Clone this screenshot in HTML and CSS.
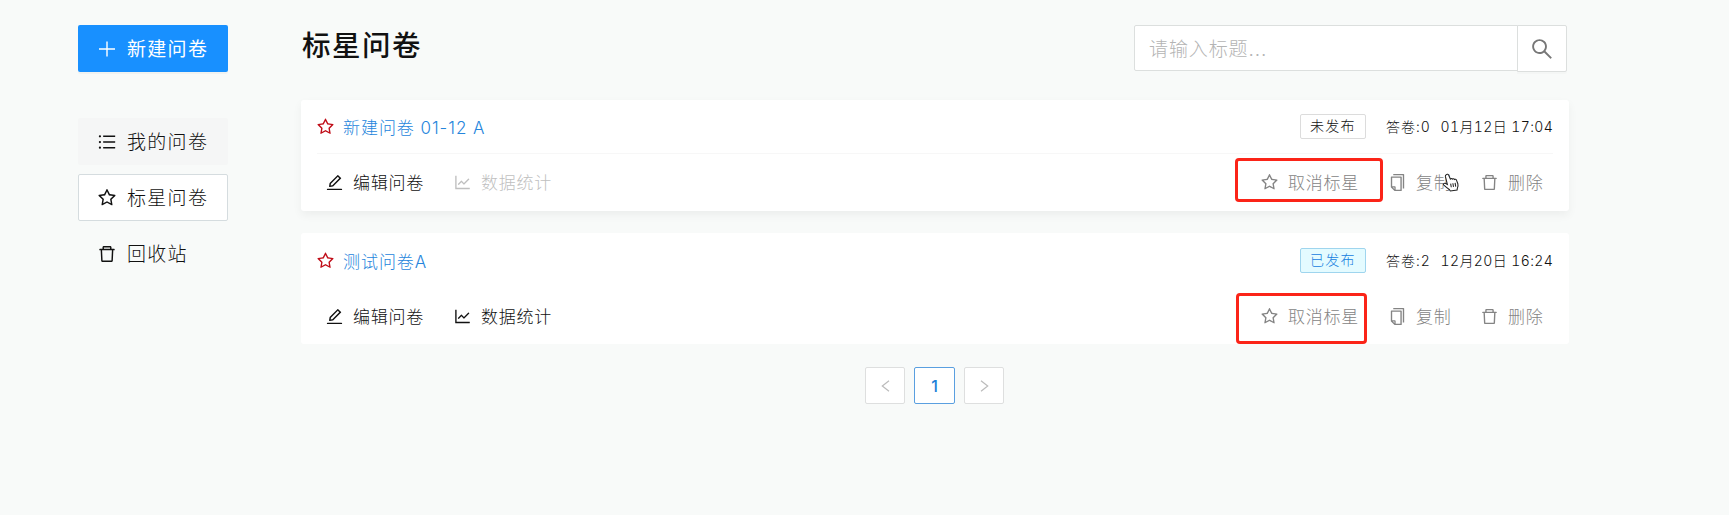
FILE: index.html
```html
<!DOCTYPE html>
<html lang="zh-CN">
<head>
<meta charset="utf-8">
<title>标星问卷</title>
<link rel="stylesheet" href="styles.css">
</head>
<body>
<svg class="defs" width="0" height="0">
  <symbol id="star" viewBox="64 64 896 896"><path d="M908.1 353.1l-253.9-36.900L540.7 86.100c-3.100-6.300-8.200-11.400-14.500-14.500-15.800-7.800-35-1.300-42.900 14.500L369.800 316.200l-253.900 36.900c-7 1-13.400 4.300-18.300 9.300a32.050 32.050 0 0 0 .6 45.300l183.700 179.100-43.400 252.900a31.950 31.950 0 0 0 46.400 33.700L512 754l227.100 119.400c6.200 3.300 13.400 4.400 20.300 3.200 17.400-3 29.100-19.500 26.100-36.900l-43.400-252.900 183.700-179.100c5-4.900 8.300-11.300 9.300-18.300 2.700-17.500-9.500-33.700-27-36.300zM664.800 561.600l36.100 210.300L512 672.700 323.100 772l36.100-210.300-152.800-149L417.600 382 512 190.700 606.400 382l211.200 30.700-152.800 148.900z"/></symbol>
  <symbol id="trash" viewBox="64 64 896 896"><path d="M360 184h-8c4.400 0 8-3.600 8-8v8h304v-8c0 4.400 3.600 8 8 8h-8v72h72v-80c0-35.300-28.700-64-64-64H352c-35.300 0-64 28.700-64 64v80h72v-72zm504 72H160c-17.700 0-32 14.300-32 32v32c0 4.400 3.600 8 8 8h60.400l24.700 523c1.600 34.100 29.800 61 63.900 61h454c34.200 0 62.300-26.800 63.900-61l24.700-523H888c4.400 0 8-3.600 8-8v-32c0-17.700-14.300-32-32-32zM731.300 840H292.700l-24.200-512h487l-24.200 512z"/></symbol>
  <symbol id="list" viewBox="64 64 896 896"><path d="M912 192H328c-4.400 0-8 3.600-8 8v56c0 4.400 3.600 8 8 8h584c4.400 0 8-3.600 8-8v-56c0-4.400-3.600-8-8-8zm0 284H328c-4.400 0-8 3.600-8 8v56c0 4.400 3.600 8 8 8h584c4.400 0 8-3.600 8-8v-56c0-4.400-3.600-8-8-8zm0 284H328c-4.400 0-8 3.600-8 8v56c0 4.400 3.600 8 8 8h584c4.400 0 8-3.600 8-8v-56c0-4.400-3.600-8-8-8zM104 228a56 56 0 1 0 112 0 56 56 0 1 0-112 0zm0 284a56 56 0 1 0 112 0 56 56 0 1 0-112 0zm0 284a56 56 0 1 0 112 0 56 56 0 1 0-112 0z"/></symbol>
  <symbol id="edit" viewBox="64 64 896 896"><path d="M257.700 752c2 0 4-.2 6-.5L431.900 722c2-.4 3.900-1.300 5.300-2.800l423.900-423.900a9.960 9.960 0 0 0 0-14.100L694.900 114.900c-1.900-1.900-4.400-2.900-7.100-2.900s-5.200 1-7.100 2.900L256.800 538.800c-1.500 1.500-2.400 3.300-2.800 5.300l-29.500 168.200a33.500 33.500 0 0 0 9.400 29.800c6.600 6.400 14.900 9.900 23.800 9.900zm67.400-174.400L687.800 215l73.300 73.300-362.700 362.600-88.900 15.700 15.600-89zM880 836H144c-17.700 0-32 14.300-32 32v36c0 4.400 3.600 8 8 8h784c4.400 0 8-3.600 8-8v-36c0-17.700-14.300-32-32-32z"/></symbol>
  <symbol id="chart" viewBox="64 64 896 896"><path d="M888 792H200V168c0-4.400-3.600-8-8-8h-56c-4.400 0-8 3.600-8 8v688c0 4.400 3.600 8 8 8h752c4.400 0 8-3.600 8-8v-56c0-4.400-3.600-8-8-8zM305.800 637.700c3.100 3.100 8.100 3.100 11.300 0l138.300-137.600L583 628.500c3.100 3.100 8.200 3.100 11.300 0l275.400-275.300c3.100-3.100 3.100-8.200 0-11.300l-39.600-39.600a8.030 8.030 0 0 0-11.300 0l-230 229.900L461.400 404a8.030 8.030 0 0 0-11.300 0L266.300 586.700a8.030 8.030 0 0 0 0 11.300l39.500 39.700z"/></symbol>
  <symbol id="copy" viewBox="64 64 896 896"><path d="M832 64H296c-4.400 0-8 3.600-8 8v56c0 4.400 3.600 8 8 8h496v688c0 4.400 3.600 8 8 8h56c4.400 0 8-3.600 8-8V96c0-17.700-14.300-32-32-32zM704 192H192c-17.700 0-32 14.300-32 32v530.700c0 8.500 3.400 16.600 9.400 22.600l173.300 173.300c2.200 2.200 4.700 4 7.400 5.500v1.900h4.200c3.500 1.300 7.200 2 11 2H704c17.700 0 32-14.300 32-32V224c0-17.700-14.300-32-32-32zM350 856.200L263.900 770H350v86.200zM664 888H414V746c0-22.100-17.900-40-40-40H232V264h432v624z"/></symbol>
  <symbol id="search" viewBox="64 64 896 896"><path d="M909.600 854.500L649.900 594.800C690.200 542.700 712 479 712 412c0-80.200-31.300-155.400-87.900-212.100-56.600-56.700-132-87.900-212.100-87.900s-155.500 31.300-212.100 87.900C143.200 256.500 112 331.800 112 412c0 80.100 31.300 155.500 87.900 212.100C256.500 680.800 331.800 712 412 712c67 0 130.600-21.800 182.700-62l259.700 259.600a8.200 8.200 0 0 0 11.600 0l43.600-43.500a8.200 8.200 0 0 0 0-11.600zM570.400 570.400C528 612.700 471.800 636 412 636s-116-23.300-158.400-65.600C211.300 528 188 471.800 188 412s23.300-116.100 65.600-158.400C296 211.300 352.200 188 412 188s116.100 23.200 158.400 65.600S636 352.200 636 412s-23.300 116.100-65.600 158.400z"/></symbol>
</svg>

<div class="layout">
  <aside class="sidebar">
    <button class="create"><svg class="plus" viewBox="0 0 16 16"><path d="M8 .5v15M0 8h16"/></svg><span>新建问卷</span></button>
    <nav class="menu">
      <a class="menu-item hover"><svg class="icon"><use href="#list"/></svg><span>我的问卷</span></a>
      <a class="menu-item active"><svg class="icon"><use href="#star"/></svg><span>标星问卷</span></a>
      <a class="menu-item"><svg class="icon"><use href="#trash"/></svg><span>回收站</span></a>
    </nav>
  </aside>

  <main class="content">
    <header class="header">
      <h1 class="heading">标星问卷</h1>
      <div class="search">
        <div class="search-input">请输入标题...</div>
        <div class="search-button"><svg class="search-icon"><use href="#search"/></svg></div>
      </div>
    </header>

    <section class="card raised">
      <div class="card-top">
        <svg class="icon-star"><use href="#star"/></svg>
        <a class="card-title">新建问卷 01-12 A</a>
        <span class="tag">未发布</span>
        <span class="count">答卷:0</span>
        <span class="date">01月12日 17:04</span>
      </div>
      <div class="card-actions">
        <a class="action edit"><svg class="icon-sm"><use href="#edit"/></svg><span>编辑问卷</span></a>
        <a class="action stat disabled"><svg class="icon-sm"><use href="#chart"/></svg><span>数据统计</span></a>
        <a class="action unstar muted"><svg class="icon-sm"><use href="#star"/></svg><span>取消标星</span><i class="mark wide"></i></a>
        <a class="action copy muted"><svg class="icon-sm"><use href="#copy"/></svg><span>复制</span>
          <svg class="cursor" viewBox="0 0 17 18"><path d="M3.500 1.600c.9-.8 2-.3 2.400.6l1.500 3.500c.7-.7 1.500-.5 1.900.1.700-.6 1.600-.4 2 .3.700-.4 1.600-.1 1.900.6l1.300 3.500c.5 1.700.1 3.200-.5 4.500l-.2 1.400-6.400.9-1-1.400C4.600 14.500 2.900 13 1.200 11.500c-.9-1 .3-2.200 1.400-1.700l2 1L2.700 3.200c-.1-.6.3-1.300.8-1.600z"/><path d="M7.700 10l.6 3.500M9.800 9.700l.6 3.500M11.900 9.400l.6 3.500"/></svg>
        </a>
        <a class="action muted"><svg class="icon-sm"><use href="#trash"/></svg><span>删除</span></a>
      </div>
    </section>

    <section class="card">
      <div class="card-top plain">
        <svg class="icon-star"><use href="#star"/></svg>
        <a class="card-title">测试问卷A</a>
        <span class="tag published">已发布</span>
        <span class="count">答卷:2</span>
        <span class="date">12月20日 16:24</span>
      </div>
      <div class="card-actions">
        <a class="action edit"><svg class="icon-sm"><use href="#edit"/></svg><span>编辑问卷</span></a>
        <a class="action stat"><svg class="icon-sm"><use href="#chart"/></svg><span>数据统计</span></a>
        <a class="action unstar muted"><svg class="icon-sm"><use href="#star"/></svg><span>取消标星</span><i class="mark narrow"></i></a>
        <a class="action copy muted"><svg class="icon-sm"><use href="#copy"/></svg><span>复制</span></a>
        <a class="action muted"><svg class="icon-sm"><use href="#trash"/></svg><span>删除</span></a>
      </div>
    </section>

    <div class="pagination">
      <span class="page"><svg class="arrow" viewBox="0 0 8 12"><path d="M7.500 .8L.8 6l6.700 5.200"/></svg></span>
      <span class="page current">1</span>
      <span class="page"><svg class="arrow" viewBox="0 0 8 12"><path d="M.5 .8L7.200 6 .5 11.200"/></svg></span>
    </div>
  </main>
</div>
</body>
</html>
```
FILE: styles.css
```css
* { box-sizing: border-box; }
body {
  margin: 0;
  min-height: 515px;
  background: #f8faf9;
  color: #111;
  font-family: Inter, "Noto Sans CJK SC", sans-serif;
  font-weight: 300;
  white-space: nowrap;
  overflow: hidden;
}
svg { fill: currentColor; flex: none; }
.defs { position: absolute; }
.layout { display: flex; padding: 25px 160px 0 78px; }

.sidebar { width: 150px; margin-right: 73px; flex: none; }
.create, .menu-item {
  display: flex;
  align-items: center;
  width: 150px;
  height: 47px;
  padding: 0 0 2px 20px;
  border: 1px solid transparent;
  border-radius: 2px;
  font: inherit;
  font-size: 19px;
  letter-spacing: 1.300px;
}
.create { background: #1890ff; color: #fff; font-weight: 400; box-shadow: 0 2px 0 rgba(0, 0, 0, .03); }
.plus { width: 16px; height: 16px; margin: 2px 12px 0 0; fill: none; stroke: #fff; stroke-width: 1.400; }
.menu { margin-top: 46px; display: flex; flex-direction: column; gap: 9px; }
.icon { width: 18px; height: 18px; margin: 2px 11px 0 -1px; }
.menu-item.hover { background: #f5f6f6; }
.menu-item.active { background: #fff; border-color: #d5dcdf; }

.content { flex: 1; min-width: 0; }
.header { display: flex; justify-content: space-between; height: 75px; padding-right: 2px; }
.heading { margin: 0; padding: 2px 0 0 1px; font-size: 28.500px; line-height: 38px; font-weight: 500; letter-spacing: 1.500px; }
.search { display: flex; }
.search-input {
  width: 384px;
  height: 46px;
  padding: 1px 0 0 14px;
  border: 1px solid #dcdfde;
  border-radius: 2px 0 0 2px;
  background: #fff;
  color: #b4b4b4;
  font-size: 19px;
  line-height: 45px;
  letter-spacing: .900px;
}
.search-button {
  display: flex;
  align-items: center;
  justify-content: center;
  width: 50px;
  height: 47px;
  margin-left: -1px;
  border: 1px solid #dcdfde;
  border-radius: 0 2px 2px 0;
  background: #fff;
  color: #777;
  box-shadow: 0 2px 0 rgba(0, 0, 0, .015);
}
.search-icon { width: 24px; height: 22px; }

.card { width: 1268px; height: 111px; margin-bottom: 22px; padding: 0 16px; border-radius: 3px; background: #fff; }
.card.raised { box-shadow: 0 4px 10px rgba(0, 0, 0, .05); }
.card-top { display: flex; align-items: center; height: 54px; border-bottom: 1px solid #f7f7f7; }
.card-top.plain { height: 55px; border-color: transparent; }
.icon-star { width: 17px; height: 18px; margin: 1px 9px 0 0; color: #c00d18; }
.card-title { margin-right: auto; color: #2585dc; font-size: 17px; letter-spacing: .950px; }
.tag {
  width: 66px;
  height: 25px;
  margin-right: 20px;
  padding-left: 9px;
  border: 1px solid #dcdcdc;
  border-radius: 2px;
  font-size: 14px;
  line-height: 22px;
  letter-spacing: 1.200px;
}
.tag.published { border-color: #9fd5ee; background: #e4fbff; color: #1580e0; }
.count, .date { padding-bottom: 1px; font-size: 14px; font-variant-numeric: tabular-nums; }
.count { width: 54.500px; letter-spacing: 1px; }
.date { width: 112.500px; letter-spacing: .400px; }

.card-actions { display: flex; align-items: center; height: 57px; padding: 0 0 2px 9px; }
.action { position: relative; display: flex; align-items: center; font-size: 17px; letter-spacing: .750px; }
.icon-sm { width: 17px; height: 17px; margin: 1px 10px 0 0; }
.edit { width: 128px; }
.disabled { color: #bfbfbf; }
.muted { color: #848484; }
.unstar { margin-left: auto; width: 128px; }
.copy { width: 92px; }
.card-actions > :last-child { width: 72px; }
.mark { position: absolute; border: 3px solid #fb2418; border-radius: 4px; }
.mark.wide { left: -26px; top: -11px; width: 148px; height: 44px; }
.mark.narrow { left: -25px; top: -10px; width: 131px; height: 51px; }
.cursor { position: absolute; left: 53px; top: 4px; width: 19px; height: 19px; fill: #fff; stroke: #222; stroke-width: 1; }

.pagination { display: flex; justify-content: center; gap: 9px; width: 1267px; padding-top: 1px; }
.page {
  display: flex;
  align-items: center;
  justify-content: center;
  width: 40.500px;
  height: 37px;
  border: 1px solid #dedfdf;
  border-radius: 2px;
  background: #fff;
  color: #2080d8;
  font-size: 16px;
  font-weight: 500;
}
.page.current { border-color: #5a9fe0; }
.arrow { width: 9px; height: 12px; fill: none; stroke: #bbb; stroke-width: 1.200; }
```
